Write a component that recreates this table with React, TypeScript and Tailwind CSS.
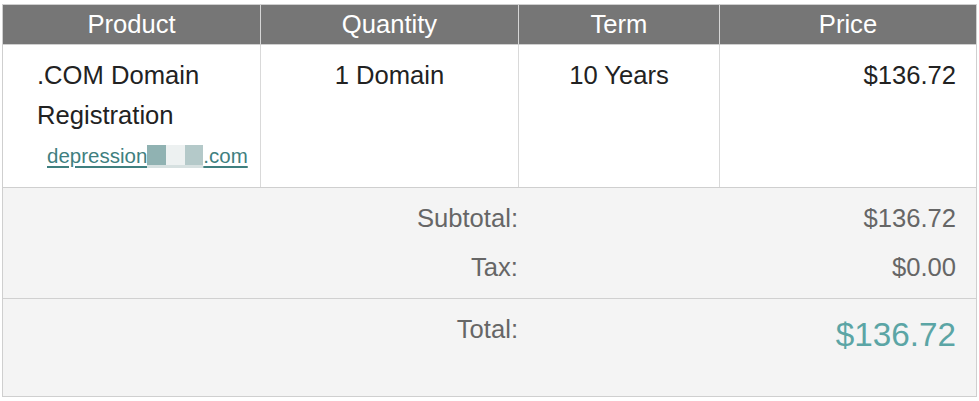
export default function App() {
  return (
    <div className="min-h-[401px] w-[979px] bg-white pt-[4px] pl-[2px] font-['Liberation_Sans',Arial,sans-serif]">
      <div className="w-[975px] border border-[#cfcfcf]">
        {/* header */}
        <div className="grid grid-cols-[257px_257px_200px_256px] gap-x-px bg-[#d6d6d6] border-b border-[#cfcfcf]">
          {['Product', 'Quantity', 'Term', 'Price'].map((h) => (
            <div
              key={h}
              className="flex h-[39px] items-center justify-center bg-[#767676] text-[25.6px] leading-none text-white"
            >
              {h}
            </div>
          ))}
        </div>

        {/* item row */}
        <div className="grid grid-cols-[257px_257px_200px_256px] gap-x-px bg-[#d9d9d9] border-b border-[#cfcfcf] text-[25.6px] leading-[40px] text-[#222]">
          <div className="h-[142px] bg-white pl-[34px] pt-[10px]">
            <div>.COM Domain</div>
            <div>Registration</div>
            <div className="mt-[7px] pl-[10px] text-[20.5px] leading-[28px]">
              <a href="#" className="text-[#3f7f7f] underline decoration-[#3f7f7f] underline-offset-[3px]">
                depression
                <span className="relative inline-block h-[23px] w-[56px] align-[-5px]">
                  <span className="absolute left-0 top-0 h-[20px] w-[19px] bg-[#90b2b2]" />
                  <span className="absolute left-[19px] top-0 h-[20px] w-[19px] bg-[#edf1f1]" />
                  <span className="absolute left-[38px] top-0 h-[20px] w-[18px] bg-[#b4c9c9]" />
                  <span className="absolute left-0 top-[20px] h-[3px] w-[56px] bg-[#d6e0e0]" />
                </span>
                .com
              </a>
            </div>
          </div>
          <div className="bg-white pt-[10px] text-center">1 Domain</div>
          <div className="bg-white pt-[10px] text-center">10 Years</div>
          <div className="bg-white pt-[10px] pr-[20px] text-right">$136.72</div>
        </div>

        {/* summary */}
        <div className="bg-[#f4f4f4] text-[25.6px] leading-[40px] text-[#666]">
          <div className="flex flex-col gap-[9px] border-b border-[#d0d0d0] pt-[10px] pb-[11px]">
            <div className="grid grid-cols-[515px_1fr]">
              <div className="text-right">Subtotal:</div>
              <div className="pr-[20px] text-right">$136.72</div>
            </div>
            <div className="grid grid-cols-[515px_1fr]">
              <div className="text-right">Tax:</div>
              <div className="pr-[20px] text-right">$0.00</div>
            </div>
          </div>
          <div className="grid h-[97px] grid-cols-[515px_1fr] items-start pt-[10px]">
            <div className="text-right">Total:</div>
            <div className="pr-[20px] text-right text-[33.3px] leading-[52px] text-[#5ba5a5]">$136.72</div>
          </div>
        </div>
      </div>
    </div>
  )
}
